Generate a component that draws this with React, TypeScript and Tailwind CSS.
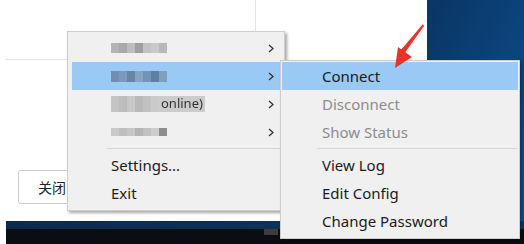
import React from "react";

const menuFont = { fontFamily: '"Noto Sans", "Liberation Sans", sans-serif' };

function Chevron() {
	return (
		<svg width="6" height="9" viewBox="0 0 6 9" className="text-[#333]">
			<polyline points="1,1 5,4.5 1,8" fill="none" stroke="currentColor" strokeWidth="1.3" />
		</svg>
	);
}

// pixelated name, as in the screenshot
function Mosaic({ cells, h }: { cells: string[]; h: string })
{
	return (
		<div className={`flex ${h} blur-[0.5px]`}>
			{cells.map((c, i) => (
				<div key={i} className="w-[8px] h-full" style={{ background: c }} />
			))}
		</div>
	);
}

function MenuRow({ children, active, sub }: { children: React.ReactNode; active?: boolean; sub?: boolean })
{
	return (
		<div className={`h-[28px] flex items-center ml-[4px] mr-[2px] ${active ? "bg-[#99c9f4]" : ""}`}>
			<div className="pl-[39px] flex-1 flex items-center">{children}</div>
			{sub && <div className="w-[14px] pr-[1px] flex items-center"><Chevron /></div>}
		</div>
	);
}

function SubRow({ label, active, disabled }: { label: string; active?: boolean; disabled?: boolean })
{
	return (
		<div className={`h-[28px] flex items-center mx-[1px] pl-[40px] text-[15px] ${active ? "bg-[#99c9f4]" : ""} ${disabled ? "text-[#8c8c8c]" : "text-[#1b1b1b]"}`}>
			{label}
		</div>
	);
}

function Arrow() {
	return (
		<svg className="absolute left-0 top-0 pointer-events-none" width="524" height="244">
			<polygon points="423,24 424,26 404,54 400,51" fill="#e8332c" />
			<polygon points="395,68 398,47 412,57" fill="#e8332c" />
		</svg>
	);
}

export default function App()
{
	return (
		<div className="relative w-[524px] h-[244px] overflow-hidden bg-white" style={menuFont}>
			<div className="flex h-[221px]">
				<div className="w-[427px] bg-white flex flex-col">
					<div className="h-[31px] ml-[255px] w-px bg-[#e4e4e4]" />
					<div className="mt-[28px] ml-[6px] w-[80px] h-px bg-[#e2e2e2]" />
					<div className="mt-[110px] ml-[18px] w-[90px] h-[34px] border border-[#cbcbcb] rounded-[3px] flex items-center pl-[19px] text-[14px] text-[#222]"
						style={{ fontFamily: '"Noto Sans CJK SC", "Noto Sans", sans-serif' }}>
						关闭
					</div>
				</div>
				<div className="flex-1 bg-gradient-to-br from-[#0a3564] to-[#0c5190]" />
			</div>
			<div className="flex h-[23px] bg-white">
				<div className="ml-[6px] flex-1 flex flex-col">
					<div className="h-[8px] bg-gradient-to-r from-[#0b2b4e] to-[#0e3760]" />
					<div className="flex-1 bg-[#0a0d12] flex">
						<div className="ml-[258px] w-[14px] h-[6px] bg-[#3d3d3d]" />
					</div>
				</div>
			</div>

			{/* main context menu */}
			<div className="absolute left-[67px] top-[31px] w-[218px] h-[180px] bg-[#f0f0f0] border border-[#cdcdcd] shadow-[2px_2px_3px_rgba(0,0,0,0.35)] pt-[2px] text-[15px] text-[#1b1b1b]">
				<MenuRow sub>
					<Mosaic h="h-[10px]" cells={["#b4b4b4", "#a9a9a9", "#bdbdbd", "#9f9f9f", "#c3c3c3", "#c9c9c9", "#b8b8b8"]} />
				</MenuRow>
				<MenuRow sub active>
					<Mosaic h="h-[11px]" cells={["#6f8fae", "#7a99b8", "#6686a6", "#86a4c2", "#7393b2", "#5f7fa0", "#809fbd"]} />
				</MenuRow>
				<MenuRow sub>
					<div className="flex items-center h-[16px]">
						<Mosaic h="h-full" cells={["#c4c4c4", "#bdbdbd", "#c8c8c8", "#b9b9b9", "#c1c1c1", "#cacaca"]} />
						<div className="h-full bg-[#cccccc] px-[2px] flex items-center text-[13px] text-[#333] blur-[0.6px]">online)</div>
					</div>
				</MenuRow>
				<MenuRow sub>
					<Mosaic h="h-[8px]" cells={["#c9c9c9", "#bebebe", "#c6c6c6", "#b5b5b5", "#c2c2c2", "#cdcdcd", "#8e8e8e"]} />
				</MenuRow>
				<div className="h-[5px] flex items-center pl-[39px] pr-[2px]">
					<div className="h-px flex-1 bg-[#d4d4d4]" />
				</div>
				<MenuRow>Settings...</MenuRow>
				<MenuRow>Exit</MenuRow>
			</div>

			{/* submenu */}
			<div className="absolute left-[280px] top-[60px] w-[240px] h-[179px] bg-[#f0f0f0] border border-[#cdcdcd] shadow-[2px_2px_3px_rgba(0,0,0,0.3)] pt-[1px]">
				<SubRow label="Connect" active />
				<SubRow label="Disconnect" disabled />
				<SubRow label="Show Status" disabled />
				<div className="h-[5px] flex items-center pl-[36px] pr-[2px]">
					<div className="h-px flex-1 bg-[#d4d4d4]" />
				</div>
				<SubRow label="View Log" />
				<SubRow label="Edit Config" />
				<SubRow label="Change Password" />
			</div>

			<Arrow />
		</div>
	);
}
